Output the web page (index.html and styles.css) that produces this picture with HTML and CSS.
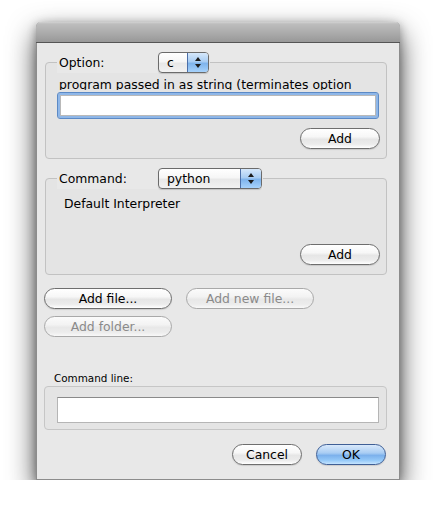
FILE: index.html
```html
<!DOCTYPE html>
<html>
<head>
<meta charset="utf-8">
<link rel="stylesheet" href="styles.css">
</head>
<body>
<div class="window">
  <div class="titlebar"></div>
  <div class="content">
    <fieldset class="group group-option">
      <legend class="legend">
        <span class="legend-label">Option:</span>
        <span class="popup popup-c">
          <span class="popup-value">c</span>
          <span class="popup-arrows"><svg width="20" height="19" viewBox="0 0 20 19"><path d="M7 8 L10 4 L13 8 Z" fill="#1c1c1c"/><path d="M7 11 L10 15 L13 11 Z" fill="#1c1c1c"/></svg></span>
        </span>
      </legend>
      <div class="desc desc-option">program passed in as string (terminates option list)</div>
      <div class="field field-focus"></div>
      <div class="row-end"><button class="btn">Add</button></div>
    </fieldset>

    <fieldset class="group group-command">
      <legend class="legend">
        <span class="legend-label">Command:</span>
        <span class="popup popup-python">
          <span class="popup-value">python</span>
          <span class="popup-arrows"><svg width="20" height="19" viewBox="0 0 20 19"><path d="M7 8 L10 4 L13 8 Z" fill="#1c1c1c"/><path d="M7 11 L10 15 L13 11 Z" fill="#1c1c1c"/></svg></span>
        </span>
      </legend>
      <div class="desc desc-command">Default Interpreter</div>
      <div class="row-end row-command"><button class="btn">Add</button></div>
    </fieldset>

    <div class="actions">
      <div class="actions-row">
        <button class="btn btn-wide">Add file...</button>
        <button class="btn btn-wide btn-disabled">Add new file...</button>
      </div>
      <div class="actions-row">
        <button class="btn btn-wide btn-disabled">Add folder...</button>
      </div>
    </div>

    <div class="cmd-label">Command line:</div>
    <div class="cmd-box">
      <div class="field field-plain"></div>
    </div>

    <div class="footer">
      <button class="btn btn-footer">Cancel</button>
      <button class="btn btn-footer btn-default">OK</button>
    </div>
  </div>
</div>
</body>
</html>
```

FILE: styles.css
```css
html, body {
  margin: 0;
  padding: 0;
  background: #ffffff;
}
body {
  font-family: "DejaVu Sans", "Liberation Sans", sans-serif;
  font-size: 12.4px;
  color: #000;
  padding-top: 22px;
  padding-left: 36px;
}
.window {
  width: 364px;
  box-sizing: border-box;
  background: #e8e8e8;
  border: 1px solid #8c8c8c;
  border-top: none;
  border-radius: 5px 5px 0 0;
  box-shadow: 0 12px 28px rgba(0, 0, 0, 0.72), 0 2px 10px rgba(0, 0, 0, 0.3);
}
.titlebar {
  height: 20px;
  border-bottom: 1px solid #555;
  border-radius: 5px 5px 0 0;
  background: linear-gradient(#d2d2d2 0, #bdbdbd 2px, #a9a9a9 60%, #989898 100%);
  margin: 0 -1px;
}
.content {
  padding: 9px 12px 14px 7px;
}
.group {
  margin: 0 0 0 1px;
  padding: 0;
  border: 1px solid #c2c2c2;
  border-radius: 4px;
  background: #e4e4e4;
  min-width: 0;
}
.group-command {
  margin-top: 9px;
}
.legend {
  margin-left: 11px;
  padding: 0 1px;
  height: 21px;
  display: flex;
  align-items: center;
  background: #e8e8e8;
}
.legend-label {
  width: 99px;
  padding-left: 1px;
}
.popup {
  display: flex;
  height: 21px;
  box-sizing: border-box;
  border: 1px solid #6b6b6b;
  border-radius: 4px;
  overflow: hidden;
  background: linear-gradient(#ffffff 0%, #f6f6f6 45%, #e8e8e8 55%, #f2f2f2 100%);
  box-shadow: 0 1px 1px rgba(0, 0, 0, 0.15);
}
.popup-c { width: 51px; }
.popup-python { width: 104px; }
.popup-value {
  flex: 1;
  padding-left: 8px;
  line-height: 19px;
}
.popup-arrows {
  width: 20px;
  border-left: 1px solid #4c6fa8;
  background: linear-gradient(#d6e8fb 0%, #a9cdf3 45%, #7fb4ec 55%, #a6d2fb 100%);
}
.popup-arrows svg { display: block; }
.desc {
  height: 14px;
  line-height: 17px;
  overflow: hidden;
}
.desc-option {
  margin-top: 3px;
  margin-left: 13px;
  width: 306px;
}
.desc-command {
  margin-top: 7px;
  height: 16px;
  line-height: 16px;
  padding-left: 18px;
}
.field {
  background: #fff;
  box-sizing: border-box;
}
.field-focus {
  margin: 2px 0 0 11px;
  width: 322px;
  height: 27px;
  border: 1px solid #5c8ac6;
  border-radius: 3px;
  box-shadow: inset 0 0 0 2px #8fb7e8, inset 0 0 0 3px #b9b9b9;
}
.row-end {
  display: flex;
  justify-content: flex-end;
  margin-top: 9px;
  padding: 0 6px 9px 0;
}
.row-command {
  margin-top: 32px;
}
.btn {
  font-family: inherit;
  font-size: 12.4px;
  color: #000;
  height: 21px;
  width: 80px;
  box-sizing: border-box;
  padding: 0;
  border: 1px solid #6e6e6e;
  border-radius: 11px;
  background: linear-gradient(#ffffff 0%, #f7f7f7 40%, #e6e6e6 55%, #ececec 80%, #ffffff 100%);
  box-shadow: 0 1px 1px rgba(0, 0, 0, 0.12);
  line-height: 19px;
}
.btn-wide { width: 128px; }
.btn-disabled {
  color: #8a8a8a;
  border-color: #a9a9a9;
  background: linear-gradient(#fbfbfb 0%, #f3f3f3 40%, #e8e8e8 55%, #ececec 80%, #f8f8f8 100%);
  box-shadow: none;
}
.actions {
  margin-top: 13px;
  display: flex;
  flex-direction: column;
  gap: 7px;
}
.actions-row {
  display: flex;
  gap: 14px;
}
.cmd-label {
  margin-top: 34px;
  height: 15px;
  padding-left: 10px;
  font-size: 10.4px;
  line-height: 15px;
}
.cmd-box {
  border: 1px solid #c6c6c6;
  border-radius: 4px;
  background: #e4e4e4;
  padding: 10px 0 6px 12px;
}
.field-plain {
  width: 322px;
  height: 26px;
  border: 1px solid #b5b5b5;
  border-top-color: #8a8a8a;
}
.footer {
  margin-top: 14px;
  display: flex;
  justify-content: flex-end;
  gap: 14px;
  padding-right: 1px;
}
.btn-footer { width: 70px; }
.btn-default {
  border-color: #3f5f96;
  background: linear-gradient(#d9e9fb 0%, #a9cdf3 42%, #7cb1ec 55%, #94c8f8 80%, #c4e4ff 100%);
}
```
